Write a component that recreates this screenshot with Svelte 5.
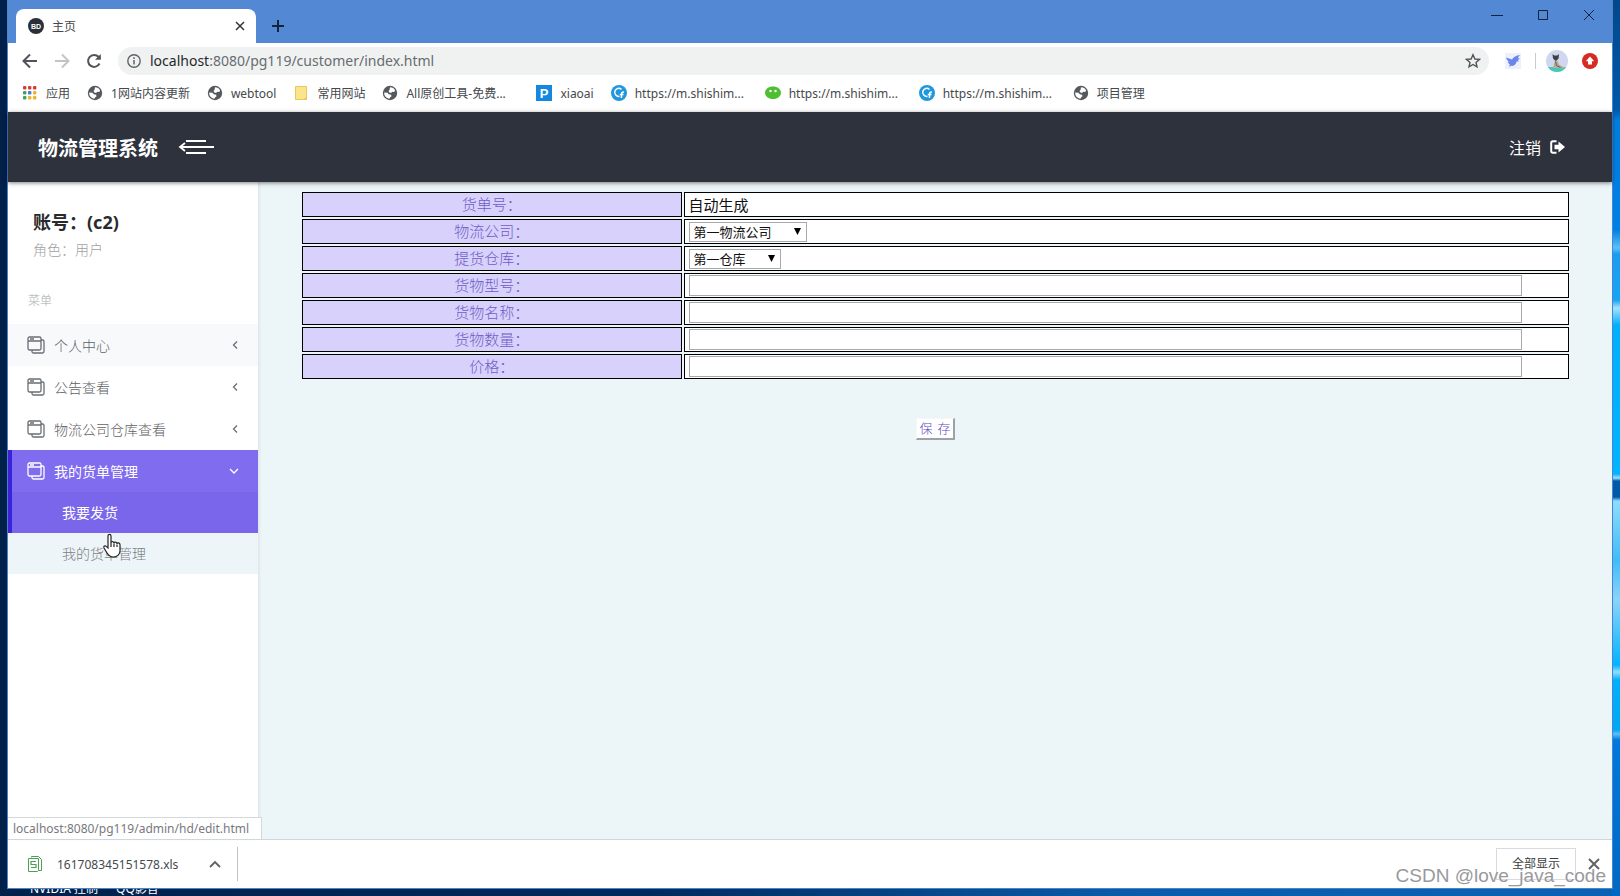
<script>
	let openMenu = 3;

	const bookmarks = [
		{ icon: 'apps', title: '应用' },
		{ icon: 'globe', title: '1网站内容更新' },
		{ icon: 'globe', title: 'webtool' },
		{ icon: 'folder', title: '常用网站' },
		{ icon: 'globe', title: 'All原创工具-免费...', long: true },
		{ icon: 'p', title: 'xiaoai' },
		{ icon: 'cf', title: 'https://m.shishim...', long: true },
		{ icon: 'chat', title: 'https://m.shishim...', long: true },
		{ icon: 'cf', title: 'https://m.shishim...', long: true },
		{ icon: 'globe', title: '项目管理' }
	];

	const appColors = [
		'#d93a35', '#d93a35', '#d93a35',
		'#3aa757', '#3f7de0', '#f0b428',
		'#3aa757', '#f0b428', '#f0b428'
	];

	const menus = [
		{ title: '个人中心', hover: true, children: [] },
		{ title: '公告查看', children: [] },
		{ title: '物流公司仓库查看', children: [] },
		{ title: '我的货单管理', children: ['我要发货', '我的货单管理'] }
	];

	const fields = [
		{ id: 'no', label: '货单号：', type: 'text' },
		{ id: 'company', label: '物流公司：', type: 'select', options: ['第一物流公司'] },
		{ id: 'store', label: '提货仓库：', type: 'select', options: ['第一仓库'] },
		{ id: 'model', label: '货物型号：', type: 'input' },
		{ id: 'name', label: '货物名称：', type: 'input' },
		{ id: 'amount', label: '货物数量：', type: 'input' },
		{ id: 'price', label: '价格：', type: 'input' }
	];

	let form = { model: '', name: '', amount: '', price: '' };

	function toggle(i) {
		openMenu = openMenu === i ? -1 : i;
	}
</script>

<div class="desktop">
	<div class="window">
		<div class="titlebar">
			<div class="tab">
				<svg class="favicon" viewBox="0 0 16 16">
					<circle cx="8" cy="8" r="8" fill="#2b2f38" />
					<text x="8" y="11" text-anchor="middle">BD</text>
				</svg>
				<span class="tab-title">主页</span>
				<button class="tab-close" aria-label="关闭标签页">
					<svg width="10" height="10" viewBox="0 0 10 10"><path d="M1 1l8 8M9 1l-8 8" stroke="#333" stroke-width="1.5" /></svg>
				</button>
			</div>
			<button class="new-tab" aria-label="新标签页">
				<svg width="12" height="12" viewBox="0 0 12 12"><path d="M6 0v12M0 6h12" stroke="#16233d" stroke-width="2" /></svg>
			</button>
			<div class="window-buttons">
				<button aria-label="最小化"><svg viewBox="0 0 12 12"><path d="M0 6.5h12" /></svg></button>
				<button aria-label="最大化"><svg viewBox="0 0 12 12"><path d="M1.5 1.5h9v9h-9z" /></svg></button>
				<button aria-label="关闭"><svg viewBox="0 0 12 12"><path d="M1 1l10 10M11 1L1 11" /></svg></button>
			</div>
		</div>

		<div class="toolbar">
			<button class="nav" aria-label="后退">
				<svg viewBox="0 0 16 16" stroke="#50545a"><path d="M15 8H2M8 1.500L1.500 8 8 14.500" /></svg>
			</button>
			<button class="nav" aria-label="前进">
				<svg viewBox="0 0 16 16" stroke="#c2c4c6"><path d="M1 8h13M8 1.500L14.500 8 8 14.500" /></svg>
			</button>
			<button class="nav" aria-label="刷新">
				<svg viewBox="0 0 16 16" stroke="#50545a">
					<path d="M13.500 10.500A6 6 0 1 1 12.500 3.800L14 5.500" />
					<path d="M14.800 1v5.800H9z" fill="#50545a" stroke="none" />
				</svg>
			</button>
			<div class="address">
				<svg width="14" height="14" viewBox="0 0 14 14">
					<circle cx="7" cy="7" r="6.200" fill="none" stroke="#5f6368" stroke-width="1.400" />
					<path d="M7 6v4.500M7 3.300v1.600" stroke="#5f6368" stroke-width="1.500" />
				</svg>
				<span class="url"><b>localhost</b>:8080/pg119/customer/index.html</span>
				<button class="star" aria-label="为此网页添加书签">
					<svg width="16" height="16" viewBox="0 0 16 16">
						<path d="M8 1.800l1.900 4.200 4.500.4-3.400 3 1 4.500L8 11.500l-4 2.400 1-4.500-3.400-3 4.500-.4z" fill="none" stroke="#50545a" stroke-width="1.400" />
					</svg>
				</button>
			</div>
			<svg class="bird" viewBox="0 0 16 16">
				<rect width="16" height="16" fill="#edf1fc" />
				<path d="M1 4.500l6 2C8.500 4 11 2.200 15 2c-1 1-1.700 2-2 3l2 .8-2.300 1.200 1.500 1.300-2.600.3c-.6 3-2.800 4.800-5.600 4.200L4 14l.8-2.400C3.600 10.800 3 9.800 3 8.600l1.400.2C2.500 7.800 1.500 6.200 1 4.500z" fill="#6a86ea" />
			</svg>
			<span class="divider"></span>
			<svg class="avatar" viewBox="0 0 22 22">
				<clipPath id="face"><circle cx="11" cy="11" r="11" /></clipPath>
				<g clip-path="url(#face)">
					<rect width="22" height="22" fill="#d0d7ee" />
					<path d="M0 17h22v5H0z" fill="#45c9b4" />
					<path d="M7 18l2-8h2l2.500 5 5 2.500v.8z" fill="#b8ac98" />
					<path d="M6.500 4l1.700 1.500h3L13 4l-.4 4.500L10.500 10.500H9L7 8.500z" fill="#3f4047" />
					<path d="M9.500 11.500l1 4 4 2" fill="none" stroke="#5b5b5f" />
				</g>
			</svg>
			<svg class="update" viewBox="0 0 16 16">
				<circle cx="8" cy="8" r="8" fill="#d52b22" />
				<path d="M8 3.500l4.200 4.800H10v3.200H6V8.300H3.800z" fill="#fff" />
			</svg>
		</div>

		<nav class="bookmarks">
			{#each bookmarks as mark}
				<a href="#top" class="bookmark">
					<svg width="16" height="16" viewBox="0 0 16 16">
						{#if mark.icon === 'apps'}
							{#each appColors as color, i}
								<rect x={1 + (i % 3) * 5} y={1 + Math.floor(i / 3) * 5} width="3.400" height="3.400" rx="1" fill={color} />
							{/each}
						{:else if mark.icon === 'globe'}
							<circle cx="8" cy="8" r="7.200" fill="#55595e" />
							<path d="M8 2.300c2.300 0 4.200 1.200 5.100 3.100l-1 1.600-2.200-.2-.6 1.200-1.900-.4-.9-1.500 1-1.200zM2.200 7.500l3.300.3 1.300 1.400 2.300.6.4 1.500-1.500 1.300-.5 1.100C4.400 13.300 2 11 2.200 7.500z" fill="#fff" />
						{:else if mark.icon === 'folder'}
							<path d="M2.500 1.500h11v13h-11z" fill="#fbe58a" stroke="#e6c95e" />
							<path d="M10.500 14.500l3-3v3z" fill="#e6c95e" />
						{:else if mark.icon === 'p'}
							<rect width="16" height="16" fill="#1487e0" />
							<text x="8" y="13" text-anchor="middle" class="glyph">P</text>
						{:else if mark.icon === 'cf'}
							<circle cx="8" cy="8" r="8" fill="#1f97dd" />
							<path d="M10.500 4.500A4 4 0 1 0 8.500 11.300M13 7.200c-1.500-.4-2.300.4-2.400 1.800L10.400 13M8.800 9.600h3.700" fill="none" stroke="#fff" stroke-width="1.500" />
						{:else}
							<path d="M8 1.500c4.500 0 8 2.600 8 6.200s-3.500 6.300-8 6.300-8-2.700-8-6.300 3.500-6.200 8-6.200z" fill="#4dbf31" />
							<circle cx="5.500" cy="6" r="1.200" fill="#fff" />
							<circle cx="10.500" cy="6" r="1.200" fill="#fff" />
						{/if}
					</svg>
					<span class:long={mark.long}>{mark.title}</span>
				</a>
			{/each}
		</nav>

		<header>
			<h1>物流管理系统</h1>
			<button class="collapse" aria-label="收起菜单">
				<svg width="36" height="16" viewBox="0 0 36 16">
					<path d="M8 2h20M3 8h33M8 14h20" stroke-width="2" />
					<path d="M7 4L2 8l5 4" stroke-width="1.800" />
				</svg>
			</button>
			<a href="#logout" class="logout">
				注销
				<svg width="16" height="14" viewBox="0 0 16 14">
					<path d="M6.500 1.200H3A1.800 1.800 0 0 0 1.200 3v8A1.800 1.800 0 0 0 3 12.800h3.500" fill="none" stroke="#fff" stroke-width="2" />
					<path d="M4.500 4.800h4V1.500L15 7l-6.500 5.500V9.200h-4z" fill="#fff" />
				</svg>
			</a>
		</header>

		<div class="page">
			<aside>
				<div class="account">
					<h2>账号：(c2)</h2>
					<p>角色：用户</p>
				</div>
				<div class="menu-title">菜单</div>
				<ul class="menu">
					{#each menus as menu, i}
						<li class:open={openMenu === i}>
							<button class="menu-item" class:hover={menu.hover} on:click={() => toggle(i)}>
								<svg width="18" height="18" viewBox="0 0 18 18">
									<rect x="1" y="1" width="13" height="13" rx="1.500" />
									<path d="M1 5h13M3 3h4M14 4h1.500A1.500 1.500 0 0 1 17 5.500v10a1.500 1.500 0 0 1-1.500 1.500h-9A1.500 1.500 0 0 1 5 15.500V14" />
								</svg>
								<span>{menu.title}</span>
								<svg class="arrow" width="10" height="10" viewBox="0 0 10 10">
									<path d={openMenu === i ? 'M1 3l4 4 4-4' : 'M8 1.500L4.500 5 8 8.500'} />
								</svg>
							</button>
							{#if openMenu === i && menu.children.length}
								<ul class="submenu">
									{#each menu.children as child, n}
										<li><a href="#{n}" class:active={n === 0}>{child}</a></li>
									{/each}
								</ul>
								<svg class="pointer" width="20" height="26" viewBox="0 0 20 26">
									<path d="M6 15V3c0-2.200 3-2.200 3 0v7c0-2 3-2 3 .3 0-1.800 3-1.500 3 .6 0-1.600 3-1.300 3 .8V18c0 3-2.500 6-6.500 6-3.500 0-5-1.500-6.500-4l-3-5c-.8-1.800 1-2.800 2.200-1.600z" fill="#fff" stroke="#222" stroke-width="1.200" />
									<path d="M9 10v4M12 10.500V14M15 11.500V14" stroke="#222" stroke-width="1.200" />
								</svg>
							{/if}
						</li>
					{/each}
				</ul>
			</aside>

			<main>
				<form on:submit|preventDefault>
					<table>
						<tbody>
							{#each fields as field}
								<tr>
									<th scope="row"><label for={field.id}>{field.label}</label></th>
									<td>
										{#if field.type === 'text'}
											<output id={field.id}>自动生成</output>
										{:else if field.type === 'select'}
											<span class="select">
												<select id={field.id}>
													{#each field.options as option}
														<option>{option}</option>
													{/each}
												</select>
												<svg width="7" height="7" viewBox="0 0 7 7"><path d="M0 0h7L3.500 7z" /></svg>
											</span>
										{:else}
											<input id={field.id} type="text" bind:value={form[field.id]} />
										{/if}
									</td>
								</tr>
							{/each}
						</tbody>
					</table>
					<button type="submit" class="save"><span>保</span> <span>存</span></button>
				</form>
			</main>
			<div class="status">localhost:8080/pg119/admin/hd/edit.html</div>
		</div>

		<footer>
			<svg width="16" height="18" viewBox="0 0 16 18" fill="none" stroke="#4f9e57">
				<path d="M4.500 2.500v-1h7l3 3v11h-3" />
				<path d="M1.500 3.500h10v12l-1 1h-9z" />
				<path d="M9 6.500H4v3h5v3H4" stroke-width="1.200" />
			</svg>
			<span class="file">161708345151578.xls</span>
			<button class="more" aria-label="更多选项">
				<svg width="12" height="8" viewBox="0 0 12 8"><path d="M1 7l5-5 5 5" fill="none" stroke="#5f6368" stroke-width="1.800" /></svg>
			</button>
			<button class="show-all">全部显示</button>
			<button class="close-bar" aria-label="关闭下载栏">
				<svg width="12" height="12" viewBox="0 0 12 12"><path d="M1 1l10 10M11 1L1 11" stroke="#5f6368" stroke-width="2" /></svg>
			</button>
			<div class="watermark">CSDN @love_java_code</div>
		</footer>
	</div>
	<div class="shortcuts">
		<span>NVIDIA 控制</span>
		<span>QQ影音</span>
	</div>
</div>

<style>
	:global(body) {
		margin: 0;
		font-family: 'Noto Sans', 'Noto Sans CJK SC', sans-serif;
		font-size: 14px;
	}

	.desktop {
		box-sizing: border-box;
		min-height: 100vh;
		padding: 0 7px;
		display: flex;
		flex-direction: column;
		background:
			linear-gradient(#02488a 0, #0059aa 110px, #007ee0 120px, #0080e4 230px, #5cc0f4 248px, #1a9df0 254px, #16a4f4 300px, #a5e2fc 308px, #00b0fc 325px, #00b4ff 474px, #9be0fc 478px, #005aa8 481px, #005aa8 497px, #8fdcfc 501px, #3fbcf8 560px, #8ad4fa 600px, #00b4ff 665px, #8fe0fc 672px, #00b0fa 680px, #00a8f6 730px, #60c0f4 734px, #0078dc 740px, #0068c4 896px) right / 8px 100% no-repeat,
			linear-gradient(90deg, #01204a, #012a5c 40%, #0a5cab 70%, #0a62b4);
	}

	button {
		display: flex;
		align-items: center;
		justify-content: center;
		padding: 0;
		border: 0;
		background: none;
		font: inherit;
		cursor: pointer;
	}

	.window {
		flex: 1;
		display: flex;
		flex-direction: column;
		border: 1px solid #4a84cc;
		border-top: 0;
		background: #fff;
	}

	.titlebar {
		display: flex;
		height: 43px;
		background: #5388d4;
	}

	.tab {
		box-sizing: border-box;
		display: flex;
		align-items: center;
		gap: 8px;
		width: 240px;
		margin: 9px 0 0 8px;
		padding: 0 11px 0 12px;
		border-radius: 8px 8px 0 0;
		background: #fff;
		font-size: 12px;
		color: #45494d;
	}

	.favicon {
		width: 16px;
		height: 16px;
	}

	.favicon text {
		font: bold 7px 'Liberation Sans', sans-serif;
		fill: #fff;
	}

	.tab-close {
		margin-left: auto;
	}

	.new-tab {
		margin: 9px 0 0 16px;
	}

	.window-buttons {
		display: flex;
		margin-left: auto;
	}

	.window-buttons button {
		width: 46px;
		height: 30px;
	}

	.window-buttons svg {
		width: 12px;
		height: 12px;
		fill: none;
		stroke: #14213a;
	}

	.toolbar {
		display: flex;
		align-items: center;
		height: 36px;
		padding: 0 14px 0 6px;
	}

	.nav {
		width: 32px;
		height: 32px;
	}

	.nav svg {
		width: 16px;
		height: 16px;
		fill: none;
		stroke-width: 2;
	}

	.address {
		flex: 1;
		display: flex;
		align-items: center;
		gap: 9px;
		height: 28px;
		margin-left: 8px;
		padding: 0 8px 0 9px;
		border-radius: 14px;
		background: #f0f2f2;
	}

	.url {
		line-height: 20px;
		color: #686c70;
	}

	.url b {
		font-weight: normal;
		color: #26282b;
	}

	.star {
		margin-left: auto;
	}

	.bird {
		width: 16px;
		height: 16px;
		margin-left: 16px;
	}

	.divider {
		width: 1px;
		height: 16px;
		margin: 0 10px 0 14px;
		background: #c9cbce;
	}

	.avatar {
		width: 22px;
		height: 22px;
	}

	.update {
		width: 16px;
		height: 16px;
		margin-left: 14px;
	}

	.bookmarks {
		display: flex;
		gap: 17px;
		height: 28px;
		padding: 0 14px 5px;
		overflow: hidden;
	}

	.bookmark {
		display: flex;
		align-items: center;
		gap: 8px;
		font-size: 12px;
		color: #45494d;
		text-decoration: none;
		white-space: nowrap;
	}

	.bookmark .long {
		width: 113px;
	}

	.glyph {
		font: bold 13px 'Liberation Sans', sans-serif;
		fill: #fff;
	}

	header {
		position: relative;
		display: flex;
		align-items: center;
		height: 70px;
		padding: 0 46px 0 30px;
		background: #2e323d;
		color: #fff;
		box-shadow: 0 1px 4px rgba(0, 0, 0, 0.5);
		z-index: 1;
	}

	h1 {
		margin: 0;
		font-size: 20px;
	}

	.collapse {
		margin-left: 20px;
	}

	.collapse svg {
		fill: none;
		stroke: #fff;
	}

	.logout {
		display: flex;
		align-items: center;
		gap: 9px;
		margin-left: auto;
		font-size: 16px;
		color: #fff;
		text-decoration: none;
	}

	.page {
		position: relative;
		flex: 1;
		display: flex;
		background: #ecf5f8;
	}

	aside {
		width: 250px;
		background: #fff;
		border-right: 1px solid #dfe7ec;
		box-shadow: 1px 0 3px rgba(0, 0, 0, 0.05);
	}

	.account {
		padding: 26px 25px 0;
	}

	h2 {
		margin: 0;
		font-size: 18px;
		line-height: 28px;
		color: #2a2a2c;
	}

	.account p {
		margin: 0;
		line-height: 28px;
		font-weight: 300;
		color: #a0a2a5;
	}

	.menu-title {
		padding: 26px 20px 12px;
		font-size: 12px;
		font-weight: 300;
		line-height: 22px;
		color: #a8aaad;
	}

	ul {
		margin: 0;
		padding: 0;
		list-style: none;
	}

	.menu li {
		position: relative;
	}

	.menu-item {
		box-sizing: border-box;
		justify-content: flex-start;
		gap: 9px;
		width: 100%;
		height: 42px;
		padding: 0 19px;
		font-weight: 300;
		color: #5d6166;
	}

	.menu-item svg {
		fill: none;
		stroke: #6a6e73;
		stroke-width: 1.3;
	}

	.menu-item.hover {
		background: #f7f9fb;
	}

	.menu-item .arrow {
		margin-left: auto;
	}

	.open .menu-item {
		background: #7f6cef;
		font-weight: 400;
		color: #fff;
	}

	.open .menu-item svg {
		stroke: #fff;
	}

	.open .menu-item,
	.submenu a.active {
		box-shadow: inset 4px 0 #3d22dc;
	}

	.submenu a {
		display: block;
		padding-left: 54px;
		line-height: 41px;
		background: #eef5f8;
		font-weight: 300;
		color: #7b7f84;
		text-decoration: none;
	}

	.submenu a.active {
		background: #7a66ea;
		font-weight: 400;
		color: #fff;
	}

	.pointer {
		position: absolute;
		left: 94px;
		top: 83px;
	}

	main {
		flex: 1;
		padding: 8px 41px;
	}

	table {
		width: 100%;
		table-layout: fixed;
		border-spacing: 2px;
		font-size: 15px;
		line-height: 20px;
	}

	th,
	td {
		box-sizing: border-box;
		height: 25px;
		border: 1px solid #000;
	}

	th {
		width: 30%;
		padding: 0 0 2px;
		background: #d7d1fb;
		font-weight: 300;
		color: #6f5cc8;
	}

	td {
		padding: 0 2px 0 4px;
		background: #fff;
		color: #111;
	}

	output {
		display: block;
	}

	.select {
		position: relative;
		display: block;
		width: max-content;
	}

	.select svg {
		position: absolute;
		top: 6px;
		right: 6px;
		pointer-events: none;
	}

	select {
		display: block;
		height: 20px;
		padding: 0 33px 0 4px;
		border: 1px solid #a9a9a9;
		border-radius: 0;
		background: #fff;
		font: 13px 'Noto Sans', 'Noto Sans CJK SC', sans-serif;
		line-height: 18px;
		color: #111;
		appearance: none;
	}

	input {
		display: block;
		box-sizing: border-box;
		width: 95%;
		height: 21px;
		padding: 1px 2px;
		border: 1px solid #a9a9a9;
		background: #fff;
		font: inherit;
	}

	.save {
		gap: 5px;
		margin: 37px auto 0;
		padding: 0 2px;
		border: 1px solid #f7f7f7;
		border-right: 2px solid #a0a0a8;
		border-bottom: 2px solid #a0a0a8;
		background: #fff;
		font-size: 13px;
		font-weight: 300;
		line-height: 19px;
		color: #5f4cbc;
	}

	.status {
		position: absolute;
		left: 0;
		bottom: 0;
		padding: 0 12px 0 5px;
		border: 1px solid #d3d8dc;
		border-width: 1px 1px 0 0;
		background: #fff;
		font-size: 12px;
		line-height: 21px;
		color: #77797c;
	}

	footer {
		position: relative;
		display: flex;
		align-items: center;
		height: 48px;
		padding: 0 12px 0 19px;
		border-top: 1px solid #cdd7dc;
	}

	.file {
		margin-left: 14px;
		font-size: 12px;
		color: #45494d;
	}

	.more {
		box-sizing: border-box;
		width: 60px;
		height: 34px;
		padding: 0 6px 0 20px;
		border-right: 1px solid #bfc3c7;
	}

	.show-all {
		margin-left: auto;
		padding: 0 15px;
		border: 1px solid #d8dadd;
		font-size: 12px;
		line-height: 30px;
		color: #3c4043;
	}

	.close-bar {
		margin-left: 12px;
	}

	.watermark {
		position: absolute;
		right: 6px;
		bottom: 0;
		font: 19px/24px 'Liberation Sans', sans-serif;
		color: #98999c;
		text-shadow: 0 0 1px #fff;
		pointer-events: none;
	}

	.shortcuts {
		display: flex;
		align-items: flex-end;
		gap: 18px;
		height: 7px;
		padding-left: 23px;
		overflow: hidden;
		font-size: 12px;
		line-height: 14px;
		color: #fff;
	}
</style>
